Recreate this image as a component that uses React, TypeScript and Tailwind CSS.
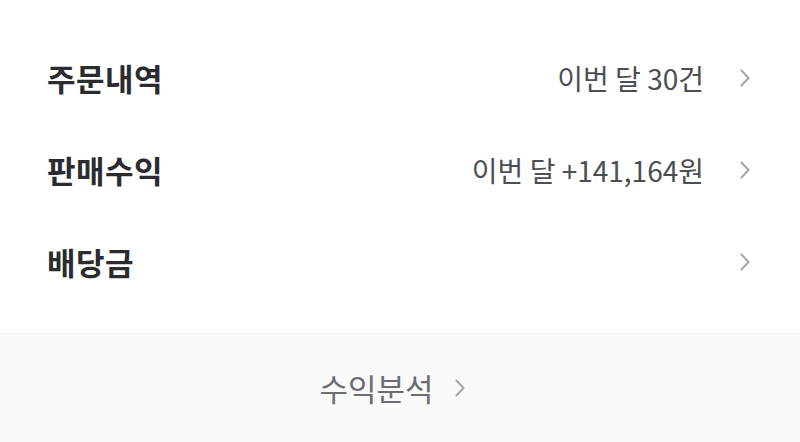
import React from 'react';

const Chevron: React.FC<{ className?: string }> = ({ className }) => (
  <svg viewBox="0 0 12 20" className={className} fill="none" stroke="currentColor" strokeWidth={2} strokeLinecap="round" strokeLinejoin="round">
    <path d="M2.5 2.5 L9.5 10 L2.5 17.5" />
  </svg>
);

const App: React.FC = () => {
  const rows = [
    { title: '주문내역', value: '이번 달 30건' },
    { title: '판매수익', value: '이번 달 +141,164원' },
    { title: '배당금', value: '' },
  ];

  return (
    <div
      className="w-[800px] h-[442px] bg-white flex flex-col overflow-hidden"
      style={{ fontFamily: '"Noto Sans CJK KR", "Noto Sans", sans-serif' }}
    >
      <div className="pt-8 pb-[25px] border-b border-[#ececee]">
        {rows.map((row, i) => (
          <div key={i} className="h-[92px] flex items-center pl-[47px] pr-[49px]">
            <span className="text-[31px] font-bold text-[#2a2c30] tracking-[0.5px]">{row.title}</span>
            <span className="ml-auto text-[28px] text-[#4b4e53]">{row.value}</span>
            <Chevron className="w-[12px] h-[20px] ml-[35px] text-[#a3a6ab]" />
          </div>
        ))}
      </div>
      <div className="flex-1 bg-[#fafafb] flex items-center justify-center pr-[15px]">
        <span className="text-[31px] text-[#6a6d72]">수익분석</span>
        <Chevron className="w-[12px] h-[20px] ml-[20px] text-[#a3a6ab]" />
      </div>
    </div>
  );
};

export default App;
